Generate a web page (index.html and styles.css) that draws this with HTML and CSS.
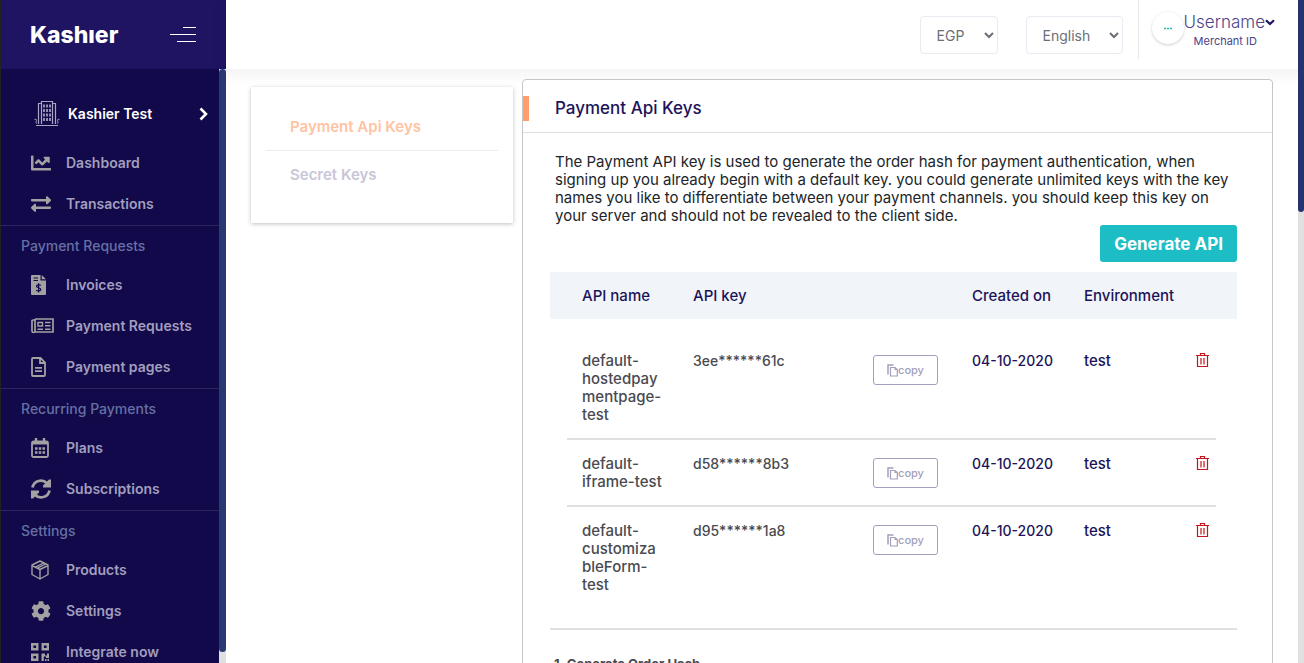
FILE: index.html
```html
<!DOCTYPE html>
<html lang="en">
<head>
<meta charset="utf-8">
<meta name="viewport" content="width=device-width, initial-scale=1">
<title>Kashier - Payment Api Keys</title>
<link rel="stylesheet" href="styles.css">
</head>
<body>
<svg class="defs" aria-hidden="true">
  <symbol id="i-copy" viewBox="0 0 11 13"><path d="M1 10.500V1H6.500" fill="none" stroke="currentColor" stroke-width="1.500"/><path d="M3.500 3.500H8L10.300 5.500V12H3.500Z" fill="none" stroke="currentColor" stroke-width="1.200"/><path d="M7.500 3v3H10.500Z" fill="currentColor"/></symbol>
  <symbol id="i-trash" viewBox="0 0 13 16"><path d="M0 3.500H13M4.500 3V1.500H8.500V3M1.500 4V14.500H11.500V4" fill="none" stroke="currentColor" stroke-width="1.200"/><path d="M5 6V12.500M8 6V12.500" fill="none" stroke="currentColor" stroke-width="1.200"/></symbol>
</svg>
<div class="app">
  <aside class="sidebar">
    <div class="brand">
      <a class="logo" href="#" aria-label="Kashier">Kashıer</a>
      <button class="toggle" type="button" aria-label="Toggle menu"><svg width="26" height="16" viewBox="0 0 26 16"><path d="M13 .5H26M0 7.500H26M7 14.500H26" stroke="#fff"/></svg></button>
    </div>
    <div class="side-body">
      <nav class="menu">
        <a class="account" href="#">
          <svg width="26" height="27" viewBox="0 0 26 27" fill="none" stroke="#a9a6c4"><path d="M7.500 24V1.500H18.500V24M4.500 24V3.500H7M21.500 24V3.500H19M2 25.500H24" stroke-width="1.200"/><path d="M.5 20c0-1 2-1 2 0s-1 1.500 0 3.500M25.500 20c0-1-2-1-2 0s1 1.500 0 3.500"/><path d="M10 4.500v3M13 4.500v3M16 4.500v3M10 9v3M13 9v3M16 9v3M10 13.500v3M13 13.500v3M16 13.500v3M10 18v3M13 18v3M16 18v3" stroke-width="1.700"/></svg>
          <span>Kashier Test</span>
          <svg class="chev" width="9" height="14" viewBox="0 0 9 14"><path d="M1.500 1.500L7 7L1.500 12.500" fill="none" stroke="#fff" stroke-width="2.600"/></svg>
        </a>
        <a class="item" href="#"><svg width="20" height="20" viewBox="0 0 512 512" fill="currentColor"><path d="M496 384H64V80c0-8.840-7.160-16-16-16H16C7.160 64 0 71.160 0 80v336c0 17.670 14.330 32 32 32h464c8.840 0 16-7.160 16-16v-32c0-8.840-7.160-16-16-16zM464 96H345.940c-21.380 0-32.090 25.850-16.970 40.970l32.400 32.400L288 242.750l-73.370-73.370c-12.500-12.500-32.760-12.500-45.250 0l-68.690 68.690c-6.250 6.250-6.250 16.380 0 22.630l22.620 22.620c6.250 6.250 16.380 6.250 22.630 0L192 237.250l73.370 73.370c12.500 12.500 32.760 12.500 45.250 0l96-96 32.400 32.400c15.120 15.120 40.970 4.410 40.970-16.970V112c.01-8.840-7.150-16-15.990-16z"/></svg><span>Dashboard</span></a>
        <a class="item" href="#"><svg width="20" height="20" viewBox="0 0 512 512" fill="currentColor"><path d="M0 168v-16c0-13.255 10.745-24 24-24h360V80c0-21.367 25.899-32.042 40.971-16.971l80 80c9.372 9.373 9.372 24.569 0 33.941l-80 80C409.956 271.982 384 261.456 384 240v-48H24c-13.255 0-24-10.745-24-24zm488 152H128v-48c0-21.314-25.862-32.080-40.971-16.971l-80 80c-9.372 9.373-9.372 24.569 0 33.941l80 80C102.057 463.997 128 453.437 128 432v-48h360c13.255 0 24-10.745 24-24v-16c0-13.255-10.745-24-24-24z"/></svg><span>Transactions</span></a>

        <h2 class="group">Payment Requests</h2>
        <a class="item" href="#"><svg width="15" height="20" viewBox="0 0 15 20"><path d="M1 0H9.500V5.500H15V19a1 1 0 0 1-1 1H1a1 1 0 0 1-1-1V1a1 1 0 0 1 1-1ZM10.700 0L15 4.300H10.700Z" fill="currentColor"/><path d="M2.500 3H7M2.500 5.500H7M9.800 10.500C9.200 9.500 5.500 9.400 5.500 11.200S9.800 12.500 9.800 14.400S6 16.200 5.300 15M7.600 8.300V17.500" fill="none" stroke="#110949" stroke-width="1.200"/></svg><span>Invoices</span></a>
        <a class="item" href="#"><svg width="23" height="16" viewBox="0 0 23 16" fill="none" stroke="currentColor"><path d="M4 1H22V14H3.500M4 1V13a1.500 1.500 0 0 1-3 0V3a1 1 0 0 1 1-1H4" stroke-width="1.700"/><path d="M7 4.500h4.500v3.500H7ZM6.500 11.200H12M14 4.500H19.500M14 7.800H19.500M14 11.200H19.500" stroke-width="1.400"/></svg><span>Payment Requests</span></a>
        <a class="item" href="#"><svg width="15" height="20" viewBox="0 0 15 20" fill="none" stroke="currentColor" stroke-width="1.800"><path d="M2 1H9.500L14 5.500V18a1 1 0 0 1-1 1H2a1 1 0 0 1-1-1V2a1 1 0 0 1 1-1ZM9 1V6H14M4 10.800H11M4 14.200H11"/></svg><span>Payment pages</span></a>

        <h2 class="group">Recurring Payments</h2>
        <a class="item" href="#"><svg width="18" height="20" viewBox="0 0 18 20" fill="none" stroke="currentColor"><rect x="1" y="3.500" width="16" height="15.500" rx="1.500" stroke-width="1.800"/><path d="M1 5H17" stroke-width="3"/><path d="M5 0V4M13 0V4" stroke-width="2.400"/><path d="M4 10.500H14M4 14.500H14" stroke-width="2.300" stroke-dasharray="2.500 1.250"/></svg><span>Plans</span></a>
        <a class="item" href="#"><svg width="20" height="20" viewBox="0 0 20 20"><path d="M1.500 8.500A8.500 8.500 0 0 1 16 4.300M18.500 11.500A8.500 8.500 0 0 1 4 15.700" fill="none" stroke="currentColor" stroke-width="2.800"/><path d="M20 .5V8.500H12V6.500L18 .5ZM0 19.500V11.500H8V13.500L2 19.500Z" fill="currentColor"/></svg><span>Subscriptions</span></a>

        <h2 class="group">Settings</h2>
        <a class="item" href="#"><svg width="18" height="20" viewBox="0 0 18 20" fill="none" stroke="currentColor" stroke-width="1.400" stroke-linejoin="round"><path d="M9 1L17 5V14.500L9 19L1 14.500V5ZM1 5.500L9 9.500L17 5.500M9 9.500V19M4.500 7.200L12.500 3M6.500 8.200L14.500 4"/></svg><span>Products</span></a>
        <a class="item" href="#"><svg width="20" height="20" viewBox="0 0 512 512" fill="currentColor"><path d="M487.400 315.700l-42.600-24.600c4.300-23.200 4.300-47 0-70.200l42.600-24.600c4.900-2.800 7.100-8.600 5.500-14-11.100-35.600-30-67.800-54.700-94.600-3.800-4.100-10-5.100-14.800-2.300L380.800 110c-17.900-15.400-38.500-27.300-60.800-35.100V25.800c0-5.600-3.900-10.500-9.400-11.700-36.700-8.200-74.300-7.800-109.200 0-5.500 1.200-9.400 6.100-9.400 11.700V75c-22.200 7.900-42.800 19.800-60.800 35.100L88.700 85.500c-4.900-2.800-11-1.900-14.800 2.300-24.700 26.700-43.600 58.900-54.700 94.600-1.700 5.400.6 11.200 5.500 14L67.300 221c-4.300 23.200-4.300 47 0 70.200l-42.600 24.600c-4.900 2.800-7.100 8.600-5.500 14 11.100 35.600 30 67.800 54.700 94.600 3.800 4.100 10 5.100 14.800 2.300l42.600-24.600c17.900 15.400 38.500 27.300 60.800 35.100v49.200c0 5.600 3.900 10.500 9.400 11.700 36.700 8.200 74.300 7.800 109.200 0 5.500-1.200 9.400-6.100 9.400-11.700v-49.200c22.200-7.900 42.800-19.800 60.800-35.100l42.600 24.600c4.900 2.800 11 1.900 14.800-2.300 24.700-26.700 43.600-58.900 54.700-94.600 1.500-5.500-.7-11.300-5.600-14.100zM256 336c-44.100 0-80-35.900-80-80s35.900-80 80-80 80 35.900 80 80-35.900 80-80 80z"/></svg><span>Settings</span></a>
        <a class="item" href="#"><svg width="18" height="18" viewBox="0 0 18 18"><path d="M1.200 1.200H6.300V6.300H1.200ZM11.700 1.200H16.800V6.300H11.700ZM1.200 11.700H6.300V16.800H1.200Z" fill="none" stroke="currentColor" stroke-width="2.400"/><path d="M10.500 10.500H14V12.500H16V10.500H18V15H15V13.500H12.800V18H10.500ZM14 16H15.500V18H14ZM16.500 16H18V18H16.500Z" fill="currentColor"/></svg><span>Integrate now</span></a>
      </nav>
      <div class="track" aria-hidden="true"><div class="thumb"></div></div>
    </div>
  </aside>

  <div class="main">
    <header class="topbar">
      <select class="pick" aria-label="Currency"><option>EGP</option></select>
      <select class="pick" aria-label="Language"><option>English</option></select>
      <div class="user">
        <span class="avatar"><svg width="8" height="3" viewBox="0 0 8 3"><path d="M0 1.500H8" stroke="#1fbfb0" stroke-width="1.500" stroke-dasharray="2 1"/></svg></span>
        <button class="who" type="button">
          <span class="name">Username<svg width="10" height="7" viewBox="0 0 10 7"><path d="M1 1.200L5 5L9 1.200" fill="none" stroke="#1e1462" stroke-width="2.200"/></svg></span>
          <span class="mid">Merchant ID</span>
        </button>
      </div>
    </header>

    <main class="content">
      <nav class="tabs">
        <a class="tab active" href="#">Payment Api Keys</a>
        <a class="tab" href="#">Secret Keys</a>
      </nav>
      <section class="panel">
        <h1 class="title">Payment Api Keys</h1>
        <div class="inner">
          <p class="intro">The Payment API key is used to generate the order hash for payment authentication, when signing up you already begin with a default key. you could generate unlimited keys with the key names you like to differentiate between your payment channels. you should keep this key on your server and should not be revealed to the client side.</p>
          <button class="generate" type="button">Generate API</button>
          <table class="keys">
            <colgroup><col class="c-name"><col class="c-key"><col class="c-copy"><col class="c-date"><col class="c-env"><col class="c-del"></colgroup>
            <thead><tr><th>API name</th><th>API key</th><th></th><th>Created on</th><th>Environment</th><th></th></tr></thead>
            <tbody>
              <tr><td>default-<wbr>hostedpay<wbr>mentpage-<wbr>test</td><td class="code">3ee******61c</td><td><button class="copy" type="button"><svg width="11" height="13"><use href="#i-copy"/></svg>copy</button></td><td class="dark code">04-10-2020</td><td class="dark">test</td><td><button class="del" type="button" aria-label="Delete"><svg width="13" height="16"><use href="#i-trash"/></svg></button></td></tr>
              <tr><td>default-<wbr>iframe-test</td><td class="code">d58******8b3</td><td><button class="copy" type="button"><svg width="11" height="13"><use href="#i-copy"/></svg>copy</button></td><td class="dark code">04-10-2020</td><td class="dark">test</td><td><button class="del" type="button" aria-label="Delete"><svg width="13" height="16"><use href="#i-trash"/></svg></button></td></tr>
              <tr><td>default-<wbr>customiza<wbr>bleForm-<wbr>test</td><td class="code">d95******1a8</td><td><button class="copy" type="button"><svg width="11" height="13"><use href="#i-copy"/></svg>copy</button></td><td class="dark code">04-10-2020</td><td class="dark">test</td><td><button class="del" type="button" aria-label="Delete"><svg width="13" height="16"><use href="#i-trash"/></svg></button></td></tr>
            </tbody>
          </table>
          <h3 class="step">1. Generate Order Hash</h3>
        </div>
      </section>
    </main>
  </div>
  <div class="track page" aria-hidden="true"><div class="thumb"></div></div>
</div>
</body>
</html>
```
FILE: styles.css
```css
* { box-sizing: border-box; }
body {
  margin: 0;
  font-family: Inter, "Open Sans", sans-serif;
  font-size: 15px;
  line-height: 18px;
  color: #212529;
  background: #fff;
}
a { color: inherit; text-decoration: none; }
button { font: inherit; cursor: pointer; }
h1, h2, h3, p { margin: 0; }
svg { flex: none; display: block; }
.defs { position: absolute; width: 0; height: 0; }

.app { display: flex; height: 100vh; overflow: hidden; }

/* sidebar */
.sidebar {
  flex: 0 0 226px;
  display: flex;
  flex-direction: column;
  border-left: 1px solid #222;
  background: #110949;
}
.brand {
  flex: 0 0 69px;
  display: flex;
  align-items: center;
  justify-content: space-between;
  padding: 0 30px 0 29px;
  background: #1e1462;
}
.logo { font-size: 23px; line-height: 30px; font-weight: 800; color: #fff; }
.toggle { padding: 0; border: 0; background: none; }
.side-body { flex: 1; display: flex; min-height: 0; overflow: hidden; }
.menu { flex: 1; min-width: 0; padding-top: 16px; }
.account {
  display: flex;
  align-items: center;
  gap: 8px;
  height: 57px;
  padding: 0 11px 0 33px;
  font-size: 14px;
  font-weight: 600;
  color: #fff;
}
.chev { margin-left: auto; }
.item {
  display: grid;
  grid-template-columns: 35px 1fr;
  align-items: center;
  height: 41px;
  padding-left: 30px;
  font-size: 14px;
  font-weight: 600;
  color: #a3a1a1;
}
.item span { color: #a29ebe; }
.group {
  height: 40px;
  margin-top: 1px;
  margin-bottom: -1px;
  padding: 11px 0 0 20px;
  border-top: 1px solid #2c2563;
  font-size: 14px;
  font-weight: 500;
  color: #6670a4;
}
.track { width: 7px; background: #e0e0e0; }
.track .thumb { height: calc(100% - 11px); border-radius: 4px; background: #293a73; }
.page { flex: none; width: 6px; }
.page .thumb { height: 32%; border-radius: 0 0 3px 3px; background: #26336d; }

/* top bar */
.main { flex: 1; min-width: 0; display: flex; flex-direction: column; }
.topbar {
  flex: 0 0 69px;
  display: flex;
  justify-content: flex-end;
  align-items: flex-start;
  padding-right: 23px;
  background: #fff;
  box-shadow: 0 2px 14px rgba(0, 0, 0, .1);
}
.pick {
  height: 38px;
  margin: 16px 28px 0 0;
  padding: 6px 1px 6px 12px;
  border: 1px solid #ebe9f2;
  border-radius: 4px;
  background: #fff;
  font-family: inherit;
  font-size: 14px;
  color: #6a6f75;
  width: 78px;
}
.pick + .pick { width: 97px; margin-right: 15px; }
.user {
  display: flex;
  height: 59px;
  padding: 12px 0 0 13px;
  border-left: 1px solid #e6e6ea;
}
.avatar {
  display: grid;
  place-items: center;
  width: 32px;
  height: 32px;
  border-radius: 50%;
  background: #fff;
  box-shadow: 0 1px 3px rgba(0, 0, 0, .2);
}
.who {
  display: flex;
  flex-direction: column;
  align-items: center;
  padding: 0;
  border: 0;
  background: none;
  color: #4d4389;
}
.name { display: flex; align-items: center; font-size: 17px; line-height: 20px; font-weight: 300; }
.mid { font-size: 11px; line-height: 18px; font-weight: 400; margin-right: 8px; }

/* content */
.content {
  flex: 1;
  min-height: 0;
  overflow: hidden;
  display: grid;
  grid-template-columns: 262px 1fr;
  gap: 9px;
  align-items: start;
  padding: 10px 25px 0 25px;
  background: linear-gradient(#f5f5f5, #fff 16px);
}
.tabs {
  margin-top: 8px;
  padding: 16px 15px 24px;
  background: #fff;
  box-shadow: 0 1px 4px rgba(0, 0, 0, .25);
}
.tab {
  display: block;
  height: 48px;
  padding: 15px 24px;
  font-size: 15px;
  font-weight: 600;
  color: #c9c6d8;
}
.tab.active { border-bottom: 1px solid #ececec; color: #ffc3a3; }
.panel {
  min-height: 640px;
  border: 1px solid #c6c6c8;
  border-radius: 4px 4px 0 0;
  background: #fff;
}
.title {
  display: flex;
  align-items: center;
  gap: 26px;
  height: 53px;
  padding-top: 4px;
  border-bottom: 1px solid #dedede;
  font-size: 17px;
  font-weight: 500;
  color: #1c1359;
}
.title::before { content: ""; width: 6px; height: 25px; background: #ff9f6e; }
.inner { display: flex; flex-direction: column; padding: 20px 35px 0 27px; }
.intro { padding-left: 5px; }
.generate {
  align-self: flex-end;
  height: 37px;
  padding: 0 14px;
  border: 0;
  border-radius: 3px;
  background: #1cbdc5;
  font-size: 17px;
  font-weight: 700;
  color: #fff;
}
.keys {
  width: 100%;
  margin-top: 10px;
  table-layout: fixed;
  border-spacing: 0;
  font-weight: 500;
  color: #4a4a50;
}
.c-name { width: 128px; }
.c-copy { width: 99px; }
.c-date, .c-env { width: 112px; }
.c-del { width: 56px; }
.keys th, .keys td { padding: 15px 0 16px 15px; text-align: left; vertical-align: top; }
.keys th { height: 47px; padding: 0 0 0 15px; vertical-align: middle; font-weight: 500; color: #1c1359; }
.keys th:first-child, .keys td:first-child { padding-left: 32px; padding-right: 15px; }
.keys thead tr { background: #f1f5f9; }
.keys tbody::before { content: ""; display: block; height: 18px; }
.keys tbody tr { background: linear-gradient(#e0e0e0, #e0e0e0) 17px 100% / calc(100% - 38px) 2px no-repeat; }
.keys tbody tr:last-child { background: none; }
.keys .code { font-size: 14px; }
.keys .dark { color: #1c1359; }
.copy {
  display: flex;
  align-items: center;
  justify-content: center;
  width: 65px;
  height: 30px;
  margin: 3px 0 -18px;
  padding: 0;
  border: 1px solid #a3a0bd;
  border-radius: 3px;
  background: #fff;
  font-size: 11px;
  font-weight: 500;
  color: #a3a0bd;
}
.del { padding: 0; border: 0; background: none; color: #c4161c; }
.step {
  margin-top: 18px;
  padding: 26px 0 0 4px;
  border-top: 2px solid #e0e0e0;
  font-size: 13px;
  line-height: 16px;
  font-weight: 700;
  color: #4a4a50;
}
```
